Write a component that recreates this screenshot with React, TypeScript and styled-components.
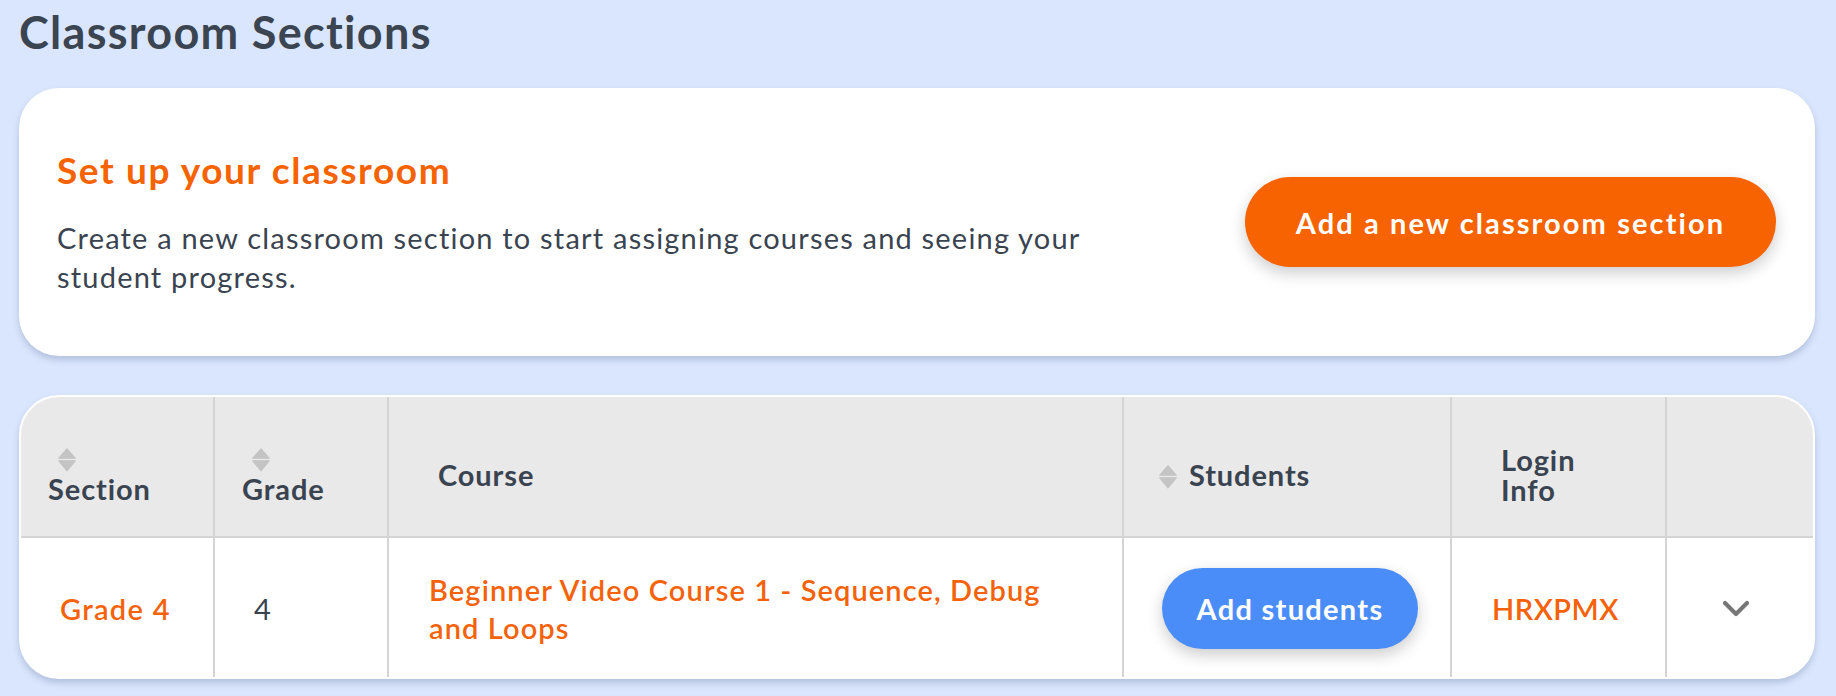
import React from "react";
import styled, { createGlobalStyle } from "styled-components";

const GlobalStyle = createGlobalStyle`
  html, body {
    margin: 0;
    padding: 0;
    background: #dae6fd;
  }
  body {
    font-family: Lato, "Open Sans", "Noto Sans", sans-serif;
    color: #3a4350;
  }
  * { box-sizing: border-box; }
`;

const Page = styled.div`
  padding: 5px 21px 17px 19px;
  display: flex;
  flex-direction: column;
`;

const Title = styled.h1`
  margin: 0 0 29px 0;
  font-size: 45px;
  line-height: 1.2;
  font-weight: 700;
  letter-spacing: 1.3px;
  color: #3b4451;
`;

const Card = styled.section`
  background: #ffffff;
  border-radius: 40px;
  box-shadow: 0 4px 6px rgba(90, 110, 150, 0.3);
`;

const SetupCard = styled(Card)`
  height: 268px;
  display: flex;
  align-items: center;
  justify-content: space-between;
  padding: 0 39px 0 38px;
  margin-bottom: 39px;
`;

const SetupText = styled.div`
  display: flex;
  flex-direction: column;
  gap: 25px;
  max-width: 1090px;
`;

const SetupHeading = styled.h2`
  margin: 0;
  font-size: 37px;
  line-height: 1.2;
  font-weight: 700;
  letter-spacing: 1.6px;
  color: #f66300;
`;

const SetupBody = styled.p`
  margin: 0;
  font-size: 29px;
  line-height: 39px;
  letter-spacing: 1.2px;
  color: #3a4350;
`;

const PillButton = styled.button<{ $tone: "orange" | "blue"; $w: number; $h: number; $ls: number }>`
  width: ${(p) => p.$w}px;
  height: ${(p) => p.$h}px;
  border: none;
  border-radius: 999px;
  background: ${(p) => (p.$tone === "orange" ? "#f66300" : "#4b8df8")};
  color: #ffffff;
  font-family: inherit;
  font-size: 29px;
  font-weight: 700;
  letter-spacing: ${(p) => p.$ls}px;
  flex-shrink: 0;
  cursor: pointer;
  box-shadow: 0 6px 16px rgba(0, 0, 0, 0.2);
`;

const TableCard = styled(Card)`
  border: 2px solid #ffffff;
  overflow: hidden;
`;

const Grid = styled.div`
  display: grid;
  grid-template-columns: 192px 174px 735px 328px 215px 1fr;
  grid-template-rows: 141px 139px;
`;

const HeadCell = styled.div<{ $pl: number; $first?: boolean }>`
  background: #e9e9e9;
  border-bottom: 2px solid #d4d4d4;
  border-left: ${(p) => (p.$first ? "none" : "2px solid #d4d4d4")};
  padding: 16px 8px 0 ${(p) => p.$pl}px;
  display: flex;
  align-items: center;
  font-size: 29px;
  line-height: 30px;
  font-weight: 700;
  letter-spacing: 0.9px;
  color: #3a4350;
`;

const Stacked = styled.div`
  display: flex;
  flex-direction: column;
  align-items: flex-start;
`;

const Inline = styled.div`
  display: flex;
  align-items: center;
  gap: 12px;
`;

const WrapLabel = styled.span<{ $w: number }>`
  display: block;
  width: ${(p) => p.$w}px;
`;

const SortWrap = styled.span<{ $indent: number; $below: number }>`
  display: block;
  width: 18px;
  height: 24px;
  margin-left: ${(p) => p.$indent}px;
  margin-bottom: ${(p) => p.$below}px;
`;

const BodyCell = styled.div<{ $pl: number; $first?: boolean; $center?: boolean }>`
  border-left: ${(p) => (p.$first ? "none" : "2px solid #d4d4d4")};
  padding: 2px 8px 0 ${(p) => p.$pl}px;
  display: flex;
  align-items: center;
  justify-content: ${(p) => (p.$center ? "center" : "flex-start")};
  font-size: 29px;
  line-height: 38px;
  letter-spacing: 1px;
`;

const LinkText = styled.a<{ $maxw?: number; $ls: number }>`
  color: #f5620a;
  text-decoration: none;
  font-weight: 600;
  letter-spacing: ${(p) => p.$ls}px;
  max-width: ${(p) => (p.$maxw ? `${p.$maxw}px` : "none")};
`;

const PlainText = styled.span`
  color: #3a4350;
`;

const SortIcon = ({ indent, below }: { indent: number; below: number }) => (
  <SortWrap $indent={indent} $below={below}>
    <svg width="18" height="24" viewBox="0 0 18 24">
      <path d="M9 0.8 L17.2 10.2 L0.8 10.2 Z" fill="#c4c4c4" stroke="#c4c4c4" strokeWidth="1.2" strokeLinejoin="round" />
      <path d="M0.8 12.8 L17.2 12.8 L9 22.8 Z" fill="#c4c4c4" stroke="#c4c4c4" strokeWidth="1.2" strokeLinejoin="round" />
    </svg>
  </SortWrap>
);

const Chevron = () => (
  <svg width="28" height="18" viewBox="0 0 28 18">
    <polyline points="3,3 14,14 25,3" fill="none" stroke="#767676" strokeWidth="4.2" strokeLinecap="round" strokeLinejoin="round" />
  </svg>
);

export default function App() {
  return (
    <>
      <GlobalStyle />
      <Page>
        <Title>Classroom Sections</Title>
        <SetupCard>
          <SetupText>
            <SetupHeading>Set up your classroom</SetupHeading>
            <SetupBody>
              Create a new classroom section to start assigning courses and seeing your student progress.
            </SetupBody>
          </SetupText>
          <PillButton $tone="orange" $w={531} $h={90} $ls={2.1}>
            Add a new classroom section
          </PillButton>
        </SetupCard>
        <TableCard>
          <Grid>
            <HeadCell $first $pl={27}>
              <Stacked>
                <SortIcon indent={10} below={4} />
                <span>Section</span>
              </Stacked>
            </HeadCell>
            <HeadCell $pl={27}>
              <Stacked>
                <SortIcon indent={10} below={4} />
                <span>Grade</span>
              </Stacked>
            </HeadCell>
            <HeadCell $pl={49}>Course</HeadCell>
            <HeadCell $pl={35}>
              <Inline>
                <SortIcon indent={0} below={0} />
                <span>Students</span>
              </Inline>
            </HeadCell>
            <HeadCell $pl={49}>
              <WrapLabel $w={100}>Login Info</WrapLabel>
            </HeadCell>
            <HeadCell $pl={0} />

            <BodyCell $first $pl={39}>
              <LinkText href="#" $ls={1.3}>Grade 4</LinkText>
            </BodyCell>
            <BodyCell $pl={39}>
              <PlainText>4</PlainText>
            </BodyCell>
            <BodyCell $pl={40}>
              <LinkText href="#" $maxw={640} $ls={1.1}>
                Beginner Video Course 1 - Sequence, Debug and Loops
              </LinkText>
            </BodyCell>
            <BodyCell $pl={38}>
              <PillButton $tone="blue" $w={256} $h={81} $ls={1.3}>
                Add students
              </PillButton>
            </BodyCell>
            <BodyCell $pl={40}>
              <LinkText href="#" $ls={0.5}>HRXPMX</LinkText>
            </BodyCell>
            <BodyCell $pl={0} $center>
              <Chevron />
            </BodyCell>
          </Grid>
        </TableCard>
      </Page>
    </>
  );
}
